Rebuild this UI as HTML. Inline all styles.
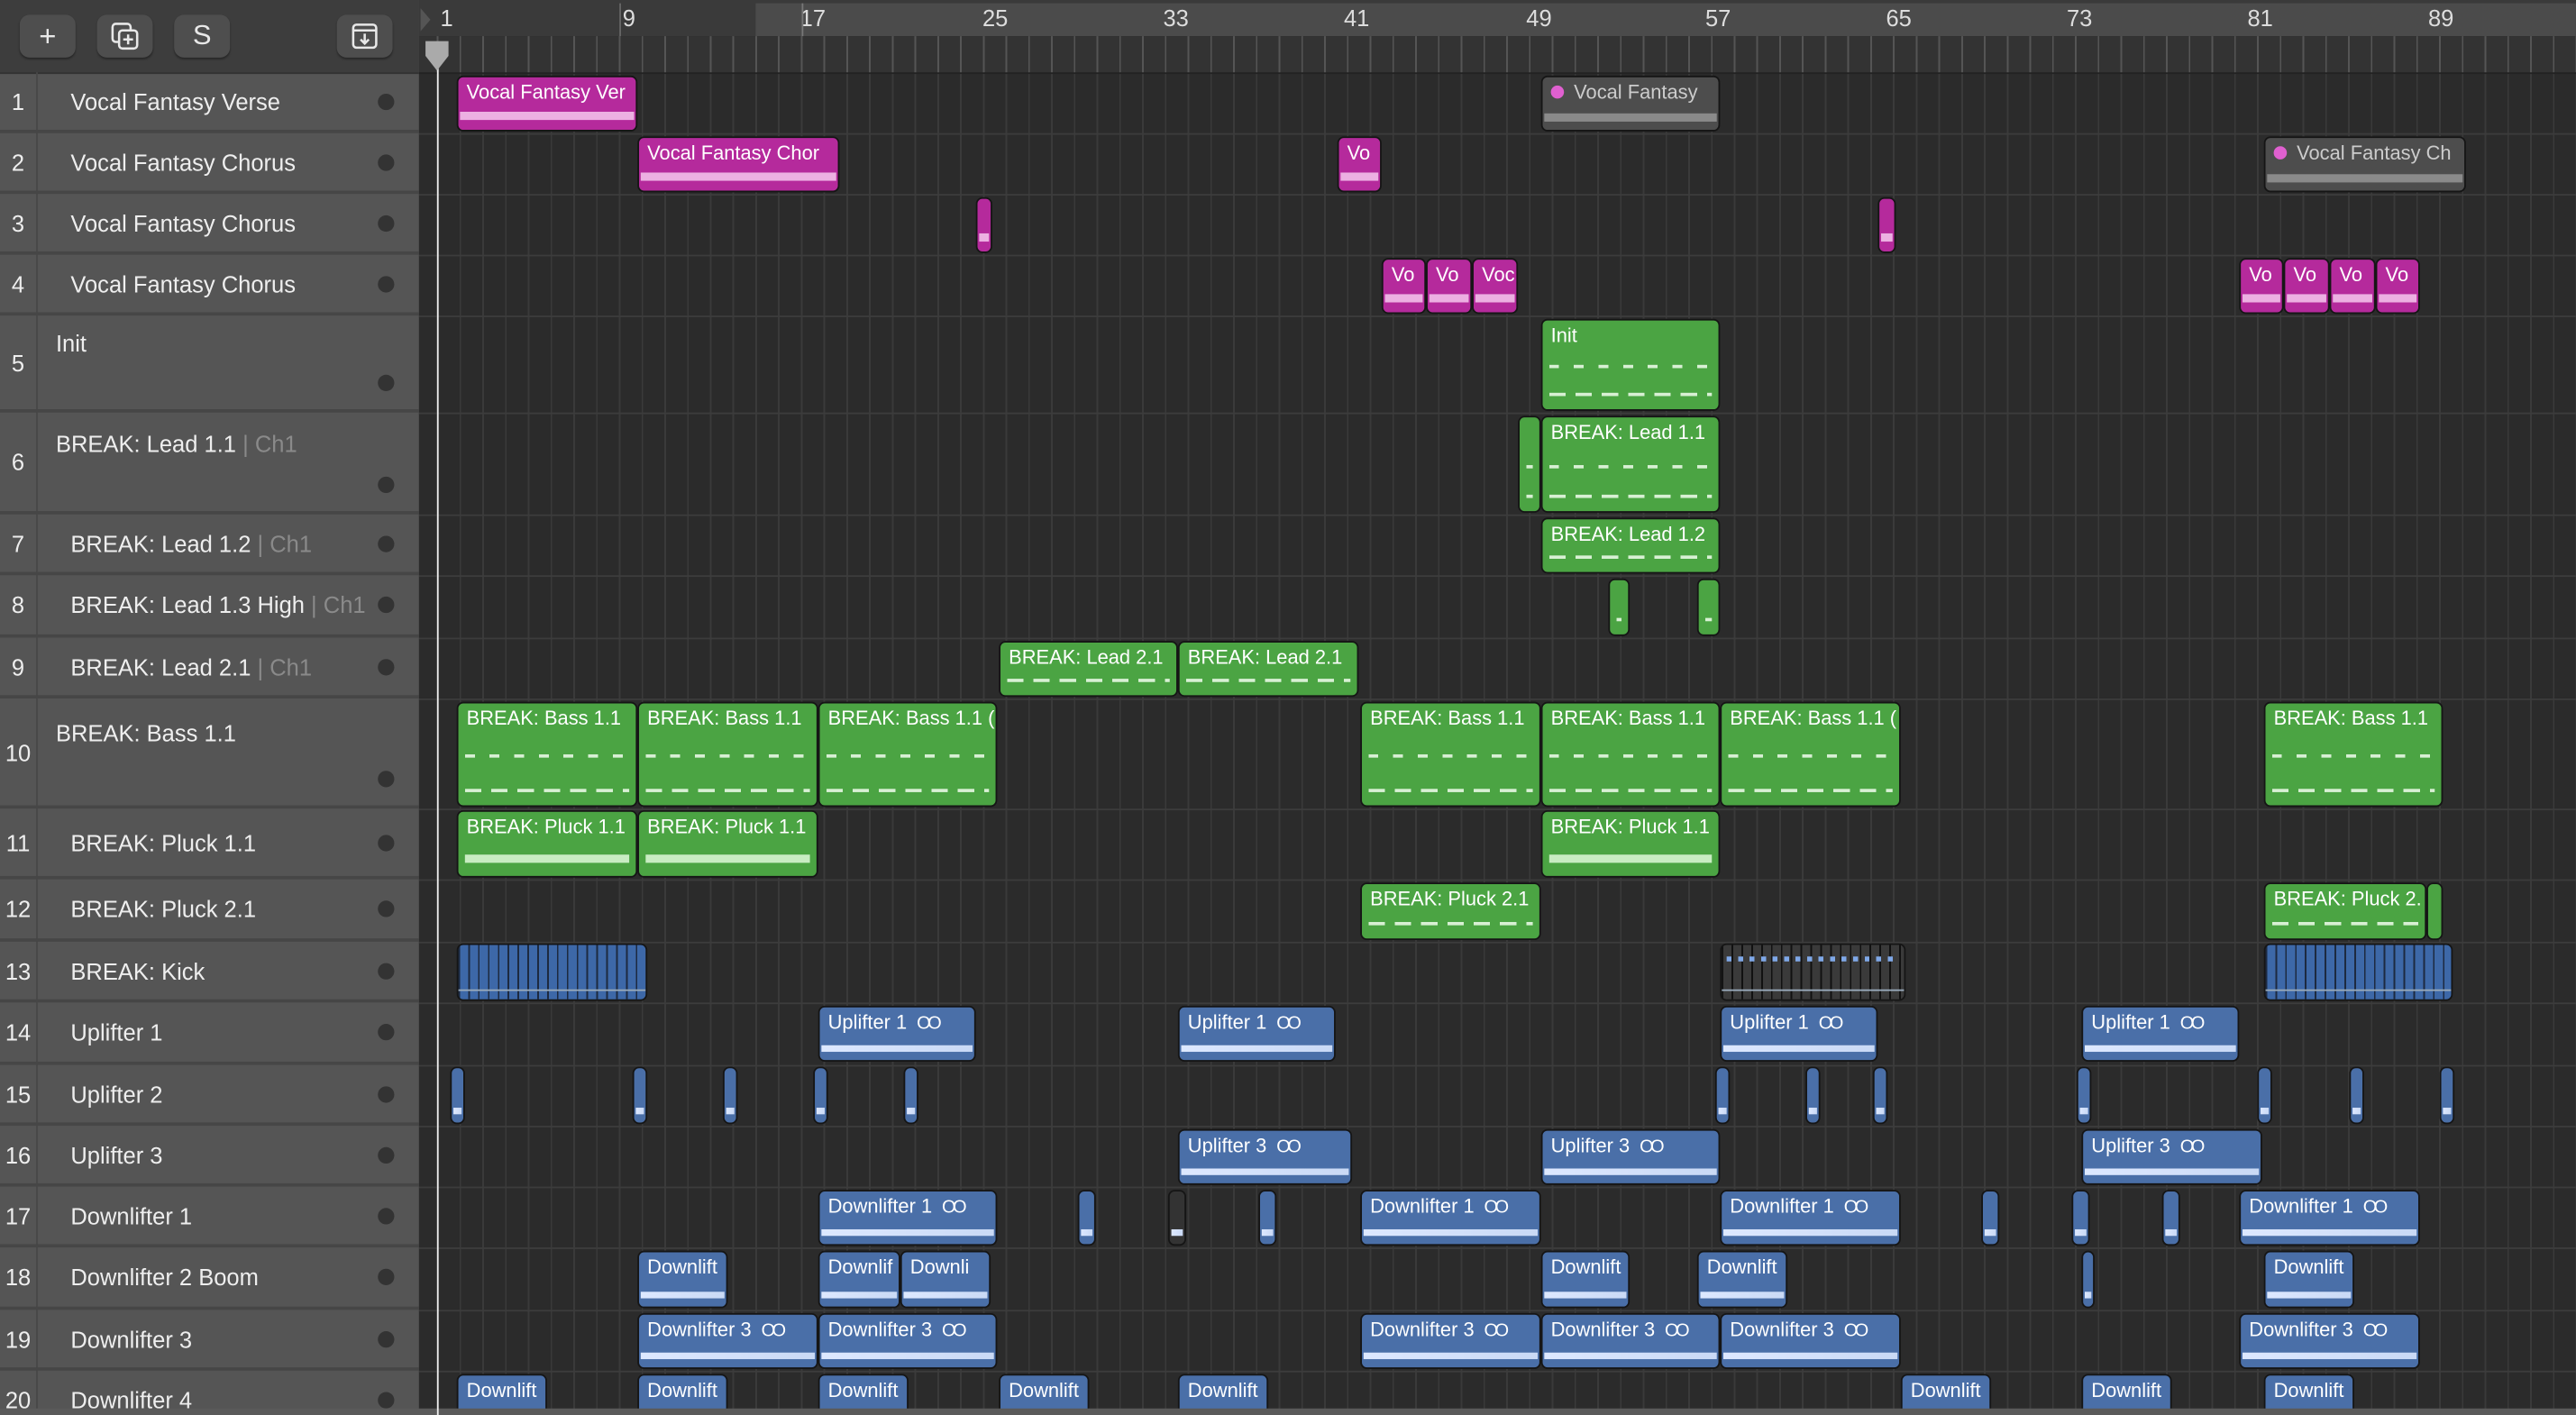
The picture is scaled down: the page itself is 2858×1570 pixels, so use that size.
<!DOCTYPE html>
<html><head><meta charset="utf-8"><style>
html,body{margin:0;padding:0;background:#2b2b2b;width:2858px;height:1570px;overflow:hidden}
#w{position:absolute;left:0;top:0;width:1568px;height:861px;transform:scale(1.8227,1.8235);transform-origin:0 0;font-family:"Liberation Sans",sans-serif;background:#2b2b2b;overflow:hidden}
.a{position:absolute}
#lp{left:0;top:0;width:255px;height:861px;background:#555}
#lh{left:0;top:0;width:255px;height:44px;background:#3d3d3d;border-bottom:1px solid #333}
.btn{position:absolute;top:9px;height:26px;width:34px;background:#4e4e4e;border-radius:6px;color:#e8e8e8;font-size:18px;text-align:center;line-height:26px;box-shadow:0 1px 1px #2a2a2a}
.tr{position:absolute;left:0;width:255px;border-bottom:2px solid #464646;box-sizing:border-box;color:#eee;font-size:14px}
.tr .n{position:absolute;left:0;width:22px;text-align:center;top:50%;transform:translateY(-50%);height:18px;line-height:18px}
.tr .t{position:absolute;left:43px;top:50%;transform:translateY(-50%);line-height:18px}
.tr .tt{position:absolute;left:34px;top:8px;line-height:18px}
.tr .d{position:absolute;left:230px;width:10px;height:10px;border-radius:50%;background:#333;top:50%;margin-top:-5px}
.tr .db{top:auto;bottom:11px;margin-top:0}
.c{color:#8a8a8a}
#sep{left:22px;top:44px;width:1px;height:817px;background:#484848}
#ru{left:255px;top:0;width:1313px;height:22px;background:#3a3a3a}
#ru2{left:460px;top:2px;width:1108px;height:20px;background:#4b4b4b}
#tk{left:255px;top:22px;width:1313px;height:22px;background:#333;border-bottom:1px solid #222}
.num{position:absolute;top:3px;color:#ddd;font-size:14px}
#grid{left:255px;top:44px;width:1313px;height:817px;background-color:#2b2b2b;background-image:repeating-linear-gradient(90deg,transparent 0,transparent 10.85px,#3a3a3a 10.85px,#3a3a3a 11.85px,transparent 11.85px,transparent 13.85px)}
.rl{position:absolute;left:255px;width:1313px;height:1px;background:#3c3c3c}
.r{position:absolute;border:1px solid #151515;border-radius:4px;overflow:hidden;font-size:12px;color:#fff;padding:2px 0 0 5px;white-space:nowrap;box-sizing:border-box;line-height:15px}
.m{background:#b52a9c}.g{background:#4ba443}.b{background:#4a6fa8}.k{background:#4d4d4d;color:#ccc}
.m::after{content:"";position:absolute;left:1px;right:1px;bottom:6px;height:5px;background:#ecb0e2}
.k::after{content:"";position:absolute;left:1px;right:1px;bottom:5px;height:5px;background:#8a8a8a}
.g::after{content:"";position:absolute;left:4px;right:4px;bottom:8px;height:2px;background:repeating-linear-gradient(90deg,#d8f0d4 0 10px,transparent 10px 16px)}
.gl::before{content:"";position:absolute;left:4px;right:4px;top:50%;height:2px;background:repeating-linear-gradient(90deg,#d8f0d4 0 6px,transparent 6px 15px)}
.gp::after{height:5px;background:#c8ecc2}
.b::after{content:"";position:absolute;left:1px;right:1px;bottom:5px;height:4px;background:linear-gradient(90deg,#dde8ff,#c9d9f5)}
.dot{display:inline-block;width:8px;height:8px;border-radius:50%;background:#e060d0;margin-right:6px}
.lp{font-size:11px;letter-spacing:-2px;margin-left:6px}
.kk{background:#3d68a8 repeating-linear-gradient(90deg,#1d2a40 0 1px,transparent 1px 6px)}
.kg{background:#3a3a3a repeating-linear-gradient(90deg,#111 0 1px,transparent 1px 6px)}
.kk::after,.kg::after{content:"";position:absolute;left:0;right:0;bottom:5px;height:1px;background:#9ab}
</style></head><body><div id="w">
<div class="a" id="grid"></div>
<div class="a" id="ru"></div><div class="a" id="ru2"></div><div class="a" id="tk"></div>
<div class="a" style="left:255px;top:22px;width:1313px;height:22px;background-image:repeating-linear-gradient(90deg,transparent 0,transparent 10.85px,#555 10.85px,#555 11.85px,transparent 11.85px,transparent 13.85px)"></div>
<span class="num" style="left:268px">1</span><span class="num" style="left:379px">9</span><span class="num" style="left:487px">17</span><span class="num" style="left:598px">25</span><span class="num" style="left:708px">33</span><span class="num" style="left:818px">41</span><span class="num" style="left:929px">49</span><span class="num" style="left:1038px">57</span><span class="num" style="left:1148px">65</span><span class="num" style="left:1258px">73</span><span class="num" style="left:1368px">81</span><span class="num" style="left:1478px">89</span>
<div class="a" style="left:377px;top:2px;width:1px;height:20px;background:#666"></div>
<div class="a" style="left:488px;top:2px;width:1px;height:20px;background:#777"></div>
<div class="rl" style="top:81px"></div><div class="rl" style="top:118px"></div><div class="rl" style="top:155px"></div><div class="rl" style="top:192px"></div><div class="rl" style="top:251px"></div><div class="rl" style="top:313px"></div><div class="rl" style="top:350px"></div><div class="rl" style="top:388px"></div><div class="rl" style="top:425px"></div><div class="rl" style="top:492px"></div><div class="rl" style="top:535px"></div><div class="rl" style="top:573px"></div><div class="rl" style="top:610px"></div><div class="rl" style="top:648px"></div><div class="rl" style="top:685px"></div><div class="rl" style="top:722px"></div><div class="rl" style="top:759px"></div><div class="rl" style="top:797px"></div><div class="rl" style="top:834px"></div>

<div class="a" id="lp"></div>
<div class="a" id="lh"></div>
<div class="btn" style="left:12px">+</div>
<div class="btn" style="left:59px"><svg width="20" height="20" viewBox="0 0 20 20" style="margin-top:3px" fill="none" stroke="#e8e8e8" stroke-width="1.4"><rect x="2.5" y="2.5" width="11" height="11" rx="2"/><rect x="6.5" y="6.5" width="11" height="11" rx="2" fill="#4e4e4e"/><path d="M12 9v6M9 12h6"/></svg></div>
<div class="btn" style="left:106px;font-size:17px">S</div>
<div class="btn" style="left:205px"><svg width="20" height="20" viewBox="0 0 20 20" style="margin-top:3px" fill="none" stroke="#e8e8e8" stroke-width="1.4"><rect x="3" y="3" width="14" height="14" rx="2"/><path d="M3 6.5h14M10 8.5v6M7.5 12l2.5 2.5 2.5-2.5"/></svg></div>
<div class="a" id="sep"></div>

<div class="tr" style="top:44px;height:37px"><span class="n">1</span><span class="t">Vocal Fantasy Verse</span><span class="d"></span></div>
<div class="tr" style="top:81px;height:37px"><span class="n">2</span><span class="t">Vocal Fantasy Chorus</span><span class="d"></span></div>
<div class="tr" style="top:118px;height:37px"><span class="n">3</span><span class="t">Vocal Fantasy Chorus</span><span class="d"></span></div>
<div class="tr" style="top:155px;height:37px"><span class="n">4</span><span class="t">Vocal Fantasy Chorus</span><span class="d"></span></div>
<div class="tr" style="top:192px;height:59px"><span class="n">5</span><span class="tt">Init</span><span class="d db"></span></div>
<div class="tr" style="top:251px;height:62px"><span class="n">6</span><span class="tt" style="top:10px">BREAK: Lead 1.1 <span class="c">| Ch1</span></span><span class="d db"></span></div>
<div class="tr" style="top:313px;height:37px"><span class="n">7</span><span class="t">BREAK: Lead 1.2 <span class="c">| Ch1</span></span><span class="d"></span></div>
<div class="tr" style="top:350px;height:38px"><span class="n">8</span><span class="t">BREAK: Lead 1.3 High <span class="c">| Ch1</span></span><span class="d"></span></div>
<div class="tr" style="top:388px;height:37px"><span class="n">9</span><span class="t">BREAK: Lead 2.1 <span class="c">| Ch1</span></span><span class="d"></span></div>
<div class="tr" style="top:425px;height:67px"><span class="n">10</span><span class="tt" style="top:12px">BREAK: Bass 1.1</span><span class="d db"></span></div>
<div class="tr" style="top:492px;height:43px"><span class="n">11</span><span class="t">BREAK: Pluck 1.1</span><span class="d"></span></div>
<div class="tr" style="top:535px;height:38px"><span class="n">12</span><span class="t">BREAK: Pluck 2.1</span><span class="d"></span></div>
<div class="tr" style="top:573px;height:37px"><span class="n">13</span><span class="t">BREAK: Kick</span><span class="d"></span></div>
<div class="tr" style="top:610px;height:38px"><span class="n">14</span><span class="t">Uplifter 1</span><span class="d"></span></div>
<div class="tr" style="top:648px;height:37px"><span class="n">15</span><span class="t">Uplifter 2</span><span class="d"></span></div>
<div class="tr" style="top:685px;height:37px"><span class="n">16</span><span class="t">Uplifter 3</span><span class="d"></span></div>
<div class="tr" style="top:722px;height:37px"><span class="n">17</span><span class="t">Downlifter 1</span><span class="d"></span></div>
<div class="tr" style="top:759px;height:38px"><span class="n">18</span><span class="t">Downlifter 2 Boom</span><span class="d"></span></div>
<div class="tr" style="top:797px;height:37px"><span class="n">19</span><span class="t">Downlifter 3</span><span class="d"></span></div>
<div class="tr" style="top:834px;height:37px"><span class="n">20</span><span class="t">Downlifter 4</span><span class="d"></span></div>

<div class="r m" style="left:278px;top:46px;width:110px;height:34px">Vocal Fantasy Ver</div>
<div class="r k" style="left:938px;top:46px;width:109px;height:34px"><span class="dot"></span>Vocal Fantasy</div>
<div class="r m" style="left:388px;top:83px;width:123px;height:34px">Vocal Fantasy Chor</div>
<div class="r m" style="left:814px;top:83px;width:27px;height:34px">Vo</div>
<div class="r k" style="left:1378px;top:83px;width:123px;height:34px"><span class="dot"></span>Vocal Fantasy Ch</div>
<div class="r m" style="left:594px;top:120px;width:10px;height:34px;padding:0"></div>
<div class="r m" style="left:1143px;top:120px;width:11px;height:34px;padding:0"></div>
<div class="r m" style="left:841px;top:157px;width:27px;height:34px">Vo</div>
<div class="r m" style="left:868px;top:157px;width:28px;height:34px">Vo</div>
<div class="r m" style="left:896px;top:157px;width:28px;height:34px">Voc</div>
<div class="r m" style="left:1363px;top:157px;width:27px;height:34px">Vo</div>
<div class="r m" style="left:1390px;top:157px;width:28px;height:34px">Vo</div>
<div class="r m" style="left:1418px;top:157px;width:28px;height:34px">Vo</div>
<div class="r m" style="left:1446px;top:157px;width:27px;height:34px">Vo</div>

<div class="r g gl" style="left:938px;top:194px;width:109px;height:56px">Init</div>
<div class="r g gl" style="left:924px;top:253px;width:14px;height:59px;padding:0"></div>
<div class="r g gl" style="left:938px;top:253px;width:109px;height:59px">BREAK: Lead 1.1</div>
<div class="r g" style="left:938px;top:315px;width:109px;height:34px">BREAK: Lead 1.2</div>
<div class="r g" style="left:979px;top:352px;width:13px;height:35px;padding:0"></div>
<div class="r g" style="left:1033px;top:352px;width:14px;height:35px;padding:0"></div>
<div class="r g" style="left:608px;top:390px;width:109px;height:34px">BREAK: Lead 2.1</div>
<div class="r g" style="left:717px;top:390px;width:110px;height:34px">BREAK: Lead 2.1</div>

<div class="r g gl" style="left:278px;top:427px;width:110px;height:64px">BREAK: Bass 1.1</div>
<div class="r g gl" style="left:388px;top:427px;width:110px;height:64px">BREAK: Bass 1.1</div>
<div class="r g gl" style="left:498px;top:427px;width:109px;height:64px">BREAK: Bass 1.1 (</div>
<div class="r g gl" style="left:828px;top:427px;width:110px;height:64px">BREAK: Bass 1.1</div>
<div class="r g gl" style="left:938px;top:427px;width:109px;height:64px">BREAK: Bass 1.1</div>
<div class="r g gl" style="left:1047px;top:427px;width:110px;height:64px">BREAK: Bass 1.1 (</div>
<div class="r g gl" style="left:1378px;top:427px;width:109px;height:64px">BREAK: Bass 1.1</div>

<div class="r g gp" style="left:278px;top:493px;width:110px;height:41px">BREAK: Pluck 1.1</div>
<div class="r g gp" style="left:388px;top:493px;width:110px;height:41px">BREAK: Pluck 1.1</div>
<div class="r g gp" style="left:938px;top:493px;width:109px;height:41px">BREAK: Pluck 1.1</div>

<div class="r g" style="left:828px;top:537px;width:110px;height:35px">BREAK: Pluck 2.1</div>
<div class="r g" style="left:1378px;top:537px;width:99px;height:35px">BREAK: Pluck 2.</div>
<div class="r g" style="left:1477px;top:537px;width:10px;height:35px;padding:0"></div>

<div class="r kk" style="left:278px;top:574px;width:116px;height:35px;padding:0"></div>
<div class="r kg" style="left:1047px;top:574px;width:113px;height:35px;padding:0"><div style="position:absolute;left:3px;right:3px;top:7px;height:3px;background:repeating-linear-gradient(90deg,#7fa8e8 0 3px,transparent 3px 7px)"></div></div>
<div class="r kk" style="left:1378px;top:574px;width:115px;height:35px;padding:0"></div>

<div class="r b" style="left:498px;top:612px;width:96px;height:34px">Uplifter 1<span class="lp">OO</span></div>
<div class="r b" style="left:717px;top:612px;width:96px;height:34px">Uplifter 1<span class="lp">OO</span></div>
<div class="r b" style="left:1047px;top:612px;width:96px;height:34px">Uplifter 1<span class="lp">OO</span></div>
<div class="r b" style="left:1267px;top:612px;width:96px;height:34px">Uplifter 1<span class="lp">OO</span></div>

<div class="r b" style="left:274px;top:649px;width:9px;height:35px;padding:0"></div>
<div class="r b" style="left:385px;top:649px;width:9px;height:35px;padding:0"></div>
<div class="r b" style="left:440px;top:649px;width:9px;height:35px;padding:0"></div>
<div class="r b" style="left:495px;top:649px;width:9px;height:35px;padding:0"></div>
<div class="r b" style="left:550px;top:649px;width:9px;height:35px;padding:0"></div>
<div class="r b" style="left:1044px;top:649px;width:9px;height:35px;padding:0"></div>
<div class="r b" style="left:1099px;top:649px;width:9px;height:35px;padding:0"></div>
<div class="r b" style="left:1140px;top:649px;width:9px;height:35px;padding:0"></div>
<div class="r b" style="left:1264px;top:649px;width:9px;height:35px;padding:0"></div>
<div class="r b" style="left:1374px;top:649px;width:9px;height:35px;padding:0"></div>
<div class="r b" style="left:1430px;top:649px;width:9px;height:35px;padding:0"></div>
<div class="r b" style="left:1485px;top:649px;width:9px;height:35px;padding:0"></div>

<div class="r b" style="left:717px;top:687px;width:106px;height:34px">Uplifter 3<span class="lp">OO</span></div>
<div class="r b" style="left:938px;top:687px;width:109px;height:34px">Uplifter 3<span class="lp">OO</span></div>
<div class="r b" style="left:1267px;top:687px;width:110px;height:34px">Uplifter 3<span class="lp">OO</span></div>

<div class="r b" style="left:498px;top:724px;width:109px;height:34px">Downlifter 1<span class="lp">OO</span></div>
<div class="r b" style="left:828px;top:724px;width:110px;height:34px">Downlifter 1<span class="lp">OO</span></div>
<div class="r b" style="left:1047px;top:724px;width:110px;height:34px">Downlifter 1<span class="lp">OO</span></div>
<div class="r b" style="left:1363px;top:724px;width:110px;height:34px">Downlifter 1<span class="lp">OO</span></div>
<div class="r b" style="left:656px;top:724px;width:11px;height:34px;padding:0"></div>
<div class="r b" style="left:711px;top:724px;width:11px;height:34px;padding:0;background:#333"></div>
<div class="r b" style="left:766px;top:724px;width:11px;height:34px;padding:0"></div>
<div class="r b" style="left:1206px;top:724px;width:11px;height:34px;padding:0"></div>
<div class="r b" style="left:1261px;top:724px;width:11px;height:34px;padding:0"></div>
<div class="r b" style="left:1316px;top:724px;width:11px;height:34px;padding:0"></div>

<div class="r b" style="left:388px;top:761px;width:55px;height:35px">Downlift</div>
<div class="r b" style="left:498px;top:761px;width:50px;height:35px">Downlif</div>
<div class="r b" style="left:548px;top:761px;width:55px;height:35px">Downli</div>
<div class="r b" style="left:938px;top:761px;width:54px;height:35px">Downlift</div>
<div class="r b" style="left:1033px;top:761px;width:55px;height:35px">Downlift</div>
<div class="r b" style="left:1267px;top:761px;width:8px;height:35px;padding:0"></div>
<div class="r b" style="left:1378px;top:761px;width:55px;height:35px">Downlift</div>

<div class="r b" style="left:388px;top:799px;width:110px;height:34px">Downlifter 3<span class="lp">OO</span></div>
<div class="r b" style="left:498px;top:799px;width:109px;height:34px">Downlifter 3<span class="lp">OO</span></div>
<div class="r b" style="left:828px;top:799px;width:110px;height:34px">Downlifter 3<span class="lp">OO</span></div>
<div class="r b" style="left:938px;top:799px;width:109px;height:34px">Downlifter 3<span class="lp">OO</span></div>
<div class="r b" style="left:1047px;top:799px;width:110px;height:34px">Downlifter 3<span class="lp">OO</span></div>
<div class="r b" style="left:1363px;top:799px;width:110px;height:34px">Downlifter 3<span class="lp">OO</span></div>

<div class="r b" style="left:278px;top:836px;width:55px;height:34px">Downlift</div>
<div class="r b" style="left:388px;top:836px;width:55px;height:34px">Downlift</div>
<div class="r b" style="left:498px;top:836px;width:55px;height:34px">Downlift</div>
<div class="r b" style="left:608px;top:836px;width:55px;height:34px">Downlift</div>
<div class="r b" style="left:717px;top:836px;width:55px;height:34px">Downlift</div>
<div class="r b" style="left:1157px;top:836px;width:55px;height:34px">Downlift</div>
<div class="r b" style="left:1267px;top:836px;width:55px;height:34px">Downlift</div>
<div class="r b" style="left:1378px;top:836px;width:55px;height:34px">Downlift</div>

<div class="a" style="left:0;top:857px;width:1568px;height:4px;background:#5a5a5a"></div>
<div class="a" style="left:266px;top:26px;width:1px;height:835px;background:#eee"></div>
<svg class="a" style="left:257px;top:24px" width="18" height="20" viewBox="0 0 18 20"><path d="M2 1h14v9l-7 9-7-9z" fill="#aaa"/></svg>
<svg class="a" style="left:255px;top:4px" width="8" height="16" viewBox="0 0 8 16"><path d="M1 1l6 7-6 7z" fill="#555"/></svg>
</div></body></html>
